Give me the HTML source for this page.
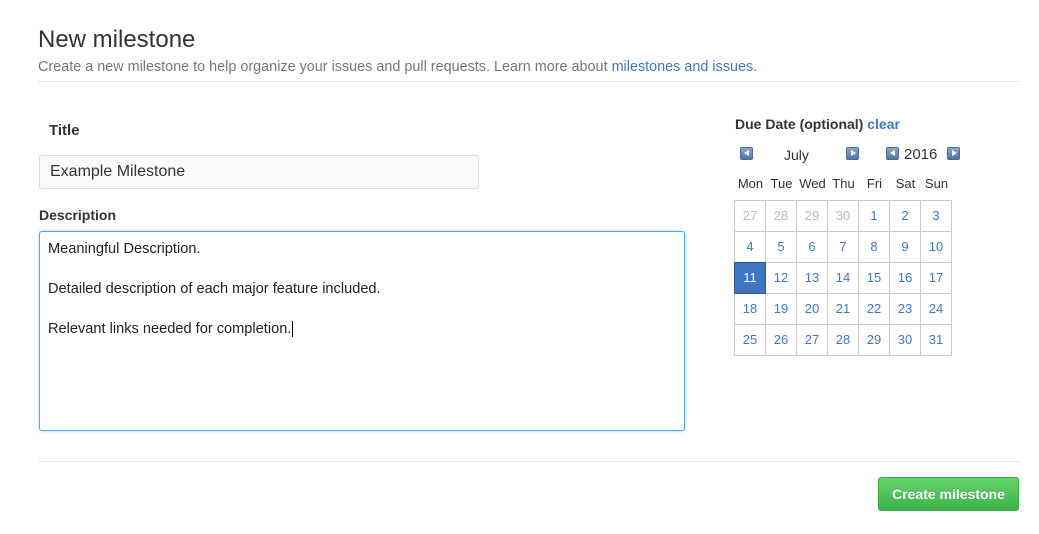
<!DOCTYPE html>
<html><head><style>
*{box-sizing:border-box;margin:0;padding:0}
body{width:1039px;height:534px;background:#fff;font-family:"Liberation Sans",sans-serif;color:#333;position:relative;overflow:hidden}
.a{position:absolute;white-space:nowrap}
.nb{position:absolute;width:13px;height:13px;border-radius:2px;background:linear-gradient(#8aa8c8,#4f76a0);border:1px solid #4a6c92}
.nb::after{content:"";position:absolute;top:2px;border-top:3.5px solid transparent;border-bottom:3.5px solid transparent}
.l::after{left:3px;border-right:5px solid #fff}
.r::after{left:4px;border-left:5px solid #fff}
.c{position:absolute;width:32px;height:32px;border:1px solid #ccc;font-size:13px;text-align:center;line-height:30px;color:#4078c0}
.g{color:#bbb}
.s{background:#3e74c0;color:#fff;border-color:#2e5a9a;z-index:2}
.d{position:absolute;font-size:13px;color:#333;width:31px;text-align:center;top:176px}
</style></head><body>
<div class="a" style="left:38px;top:26px;font-size:24px;color:#333">New milestone</div>
<div class="a" style="left:38px;top:59px;font-size:14.4px;color:#767676">Create a new milestone to help organize your issues and pull requests. Learn more about <span style="color:#4078c0">milestones and issues.</span></div>
<div class="a" style="left:38px;top:81px;width:981px;height:1px;background:#e5e5e5"></div>

<div class="a" style="left:49px;top:122px;font-size:15px;font-weight:bold">Title</div>
<div class="a" style="left:39px;top:155px;width:440px;height:34px;background:#fafafa;border:1px solid #ddd;border-radius:3px;font-size:16px;padding:7px 10px">Example Milestone</div>
<div class="a" style="left:39px;top:207px;font-size:14px;font-weight:bold">Description</div>
<div class="a" style="left:39px;top:231px;width:646px;height:200px;border:1px solid #51a7e8;border-radius:3px;box-shadow:0 0 3px rgba(81,167,232,.5);font-size:14.6px;line-height:20px;padding:7px 8px;white-space:pre;color:#222">Meaningful Description.

Detailed description of each major feature included.

Relevant links needed for completion.<span style="border-left:1px solid #000;margin-left:1px"></span></div>

<div class="a" style="left:735px;top:116px;font-size:14px;font-weight:bold">Due Date (optional) <span style="color:#4078c0">clear</span></div>
<div class="nb l" style="left:740px;top:147px"></div>
<div class="a" style="left:784px;top:147px;font-size:14px">July</div>
<div class="nb r" style="left:846px;top:147px"></div>
<div class="nb l" style="left:886px;top:147px"></div>
<div class="a" style="left:904px;top:146px;font-size:15px">2016</div>
<div class="nb r" style="left:947px;top:147px"></div>
<div class="d" style="left:735px">Mon</div><div class="d" style="left:766px">Tue</div><div class="d" style="left:797px">Wed</div><div class="d" style="left:828px">Thu</div><div class="d" style="left:859px">Fri</div><div class="d" style="left:890px">Sat</div><div class="d" style="left:921px">Sun</div>
<div id="cal"></div>
<script>
var h='',days=[27,28,29,30];for(var i=1;i<=31;i++)days.push(i);
for(var k=0;k<35;k++){var r=Math.floor(k/7),c=k%7,cl='c'+(k<4?' g':'')+(days[k]==11&&k>4?' s':'');
h+='<div class="'+cl+'" style="left:'+(734+c*31)+'px;top:'+(200+r*31)+'px">'+days[k]+'</div>';}
document.getElementById('cal').innerHTML=h;
</script>

<div class="a" style="left:38px;top:461px;width:981px;height:1px;background:#e5e5e5"></div>
<div class="a" style="left:878px;top:477px;width:141px;height:34px;border-radius:3px;background:linear-gradient(#64d36a,#3cb449);border:1px solid #3ca848;color:#fff;font-weight:bold;font-size:14px;text-align:center;line-height:32px;text-shadow:0 -1px 0 rgba(0,0,0,.15)">Create milestone</div>
</body></html>
